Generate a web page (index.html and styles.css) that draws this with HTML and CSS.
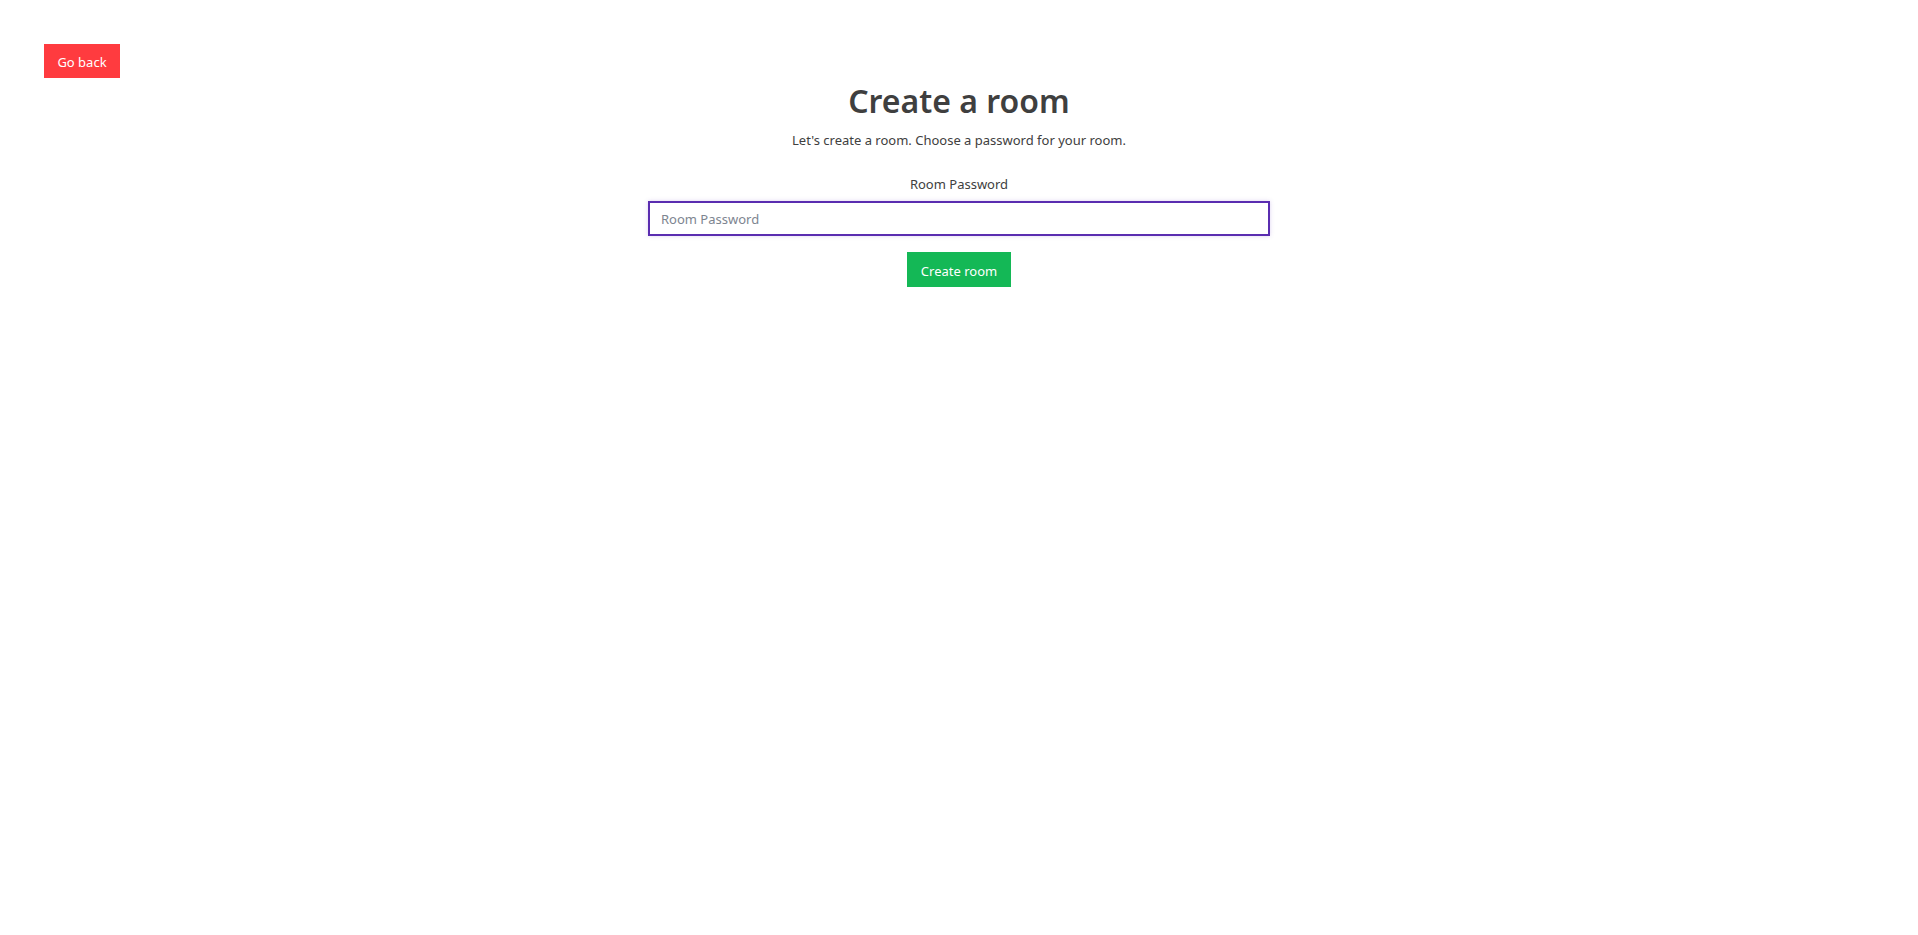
FILE: index.html
```html
<!DOCTYPE html>
<html lang="en">
<head>
<meta charset="utf-8">
<title>Create a room</title>
<link rel="stylesheet" href="styles.css">
</head>
<body>
<div class="page">
  <div class="topbar">
    <button class="btn btn-back">Go back</button>
  </div>
  <main class="create">
    <h1 class="title">Create a room</h1>
    <p class="subtitle">Let's create a room. Choose a password for your room.</p>
    <label class="label" for="pw">Room Password</label>
    <input id="pw" class="input" type="text" placeholder="Room Password" autofocus>
    <button class="btn btn-create">Create room</button>
  </main>
</div>
</body>
</html>
```

FILE: styles.css
```css
html, body {
  margin: 0;
  padding: 0;
  background: #ffffff;
}
body {
  font-family: "Noto Sans", "Open Sans", sans-serif;
  color: #404040;
}
.page {
  padding: 44px 44px 0 44px;
}
.topbar {
  display: flex;
}
.btn {
  border: none;
  border-radius: 0;
  font-family: "Noto Sans", "Open Sans", sans-serif;
  font-size: 13px;
  color: #ffffff;
  height: 34px;
  padding: 2px 0 0 0;
  cursor: pointer;
}
.btn-back {
  background: #ff3b3f;
  width: 76px;
}
.create {
  display: flex;
  flex-direction: column;
  align-items: center;
}
.title {
  margin: 3px 0 0 0;
  font-size: 32px;
  font-weight: 600;
  line-height: 40px;
  color: #3f3f3f;
}
.subtitle {
  margin: 10px 0 0 0;
  font-size: 13px;
  line-height: 18px;
  color: #404040;
}
.label {
  margin-top: 26px;
  font-size: 13px;
  line-height: 18px;
  color: #404040;
}
.input {
  margin-top: 8px;
  box-sizing: border-box;
  width: 622px;
  height: 35px;
  border: 2px solid #5a2db0;
  outline: none;
  box-shadow: 0 0 4px rgba(120, 80, 200, 0.25);
  padding: 0 11px;
  font-family: "Noto Sans", "Open Sans", sans-serif;
  font-size: 13px;
  color: #404040;
}
.input::placeholder {
  color: #7d8590;
}
.btn-create {
  margin-top: 16px;
  background: #14b856;
  width: 104px;
  height: 35px;
}
```
